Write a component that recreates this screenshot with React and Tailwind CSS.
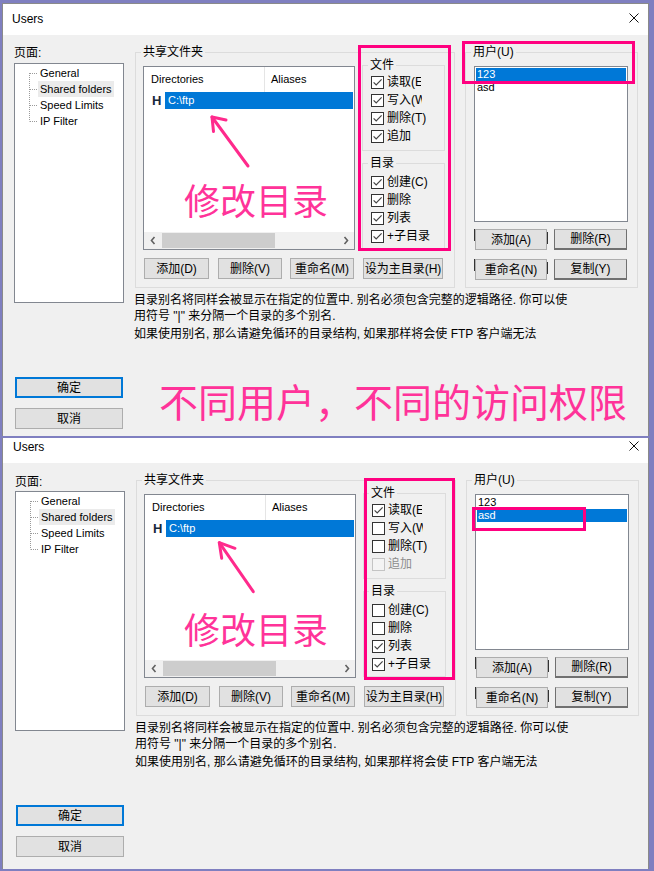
import React from 'react';

const ui = "font-[family-name:'Liberation_Sans','Noto_Sans_CJK_SC',sans-serif]";
const cjk = "font-[family-name:'Noto_Sans_CJK_SC',sans-serif]";

const perms = [
  {
    file: [
      { label: '读取(E)', on: true, clip: 'max-w-[34px]' },
      { label: '写入(W)', on: true, clip: 'max-w-[35px]' },
      { label: '删除(T)', on: true },
      { label: '追加', on: true },
    ],
    dir: [
      { label: '创建(C)', on: true },
      { label: '删除', on: true },
      { label: '列表', on: true },
      { label: '+子目录', on: true },
    ],
  },
  {
    file: [
      { label: '读取(E)', on: true, clip: 'max-w-[34px]' },
      { label: '写入(W)', on: false, clip: 'max-w-[35px]' },
      { label: '删除(T)', on: false },
      { label: '追加', on: false, off: true },
    ],
    dir: [
      { label: '创建(C)', on: false },
      { label: '删除', on: false },
      { label: '列表', on: true },
      { label: '+子目录', on: true },
    ],
  },
];

function Btn({ className = '', children }) {
  return (
    <div className={`flex shrink-0 items-center justify-center bg-[#e1e1e1] text-[12px] leading-[14px] ${className}`}>
      {children}
    </div>
  );
}

function Group({ label, className = '', children }) {
  return (
    <div className={`relative shrink-0 border border-[#dcdcdc] ${className}`}>
      <span className="absolute left-[5px] top-[-8px] bg-[#f0f0f0] px-[2px] text-[12px] leading-[14px] whitespace-nowrap">
        {label}
      </span>
      {children}
    </div>
  );
}

function Check({ label, on, off, clip = '' }) {
  return (
    <div className="flex h-[18px] items-center">
      <span
        className={`flex h-[13px] w-[13px] shrink-0 items-center justify-center border ${
          off ? 'border-[#c4c4c4] bg-[#f4f4f4]' : 'border-[#333] bg-white'
        }`}
      >
        {on && (
          <svg width="11" height="11" viewBox="0 0 11 11">
            <path d="M1.6 5.4 L4.2 8 L9.6 2.4" fill="none" stroke="#444" strokeWidth="1.2" />
          </svg>
        )}
      </span>
      <span
        className={`ml-[3px] overflow-hidden whitespace-nowrap text-[12px] leading-[14px] ${clip} ${
          off ? 'text-[#8d8d8d]' : 'text-black'
        }`}
      >
        {label}
      </span>
    </div>
  );
}

function Chevron({ dir }) {
  return (
    <svg width="8" height="9" viewBox="0 0 8 9">
      <path
        d={dir === 'l' ? 'M5.5 1 L2.5 4.5 L5.5 8' : 'M2.5 1 L5.5 4.5 L2.5 8'}
        fill="none"
        stroke="#606060"
        strokeWidth="1.6"
      />
    </svg>
  );
}

function Tree() {
  const items = ['General', 'Shared folders', 'Speed Limits', 'IP Filter'];
  return (
    <div className="h-[240px] border border-[#828790] bg-white pt-[1px]">
      {items.map((t, i) => (
        <div key={t} className="flex h-[16px] items-center">
          <svg width="23" height="16" className="shrink-0">
            <line x1="14.5" y1={i === 0 ? 8 : 0} x2="14.5" y2={i === 3 ? 8.5 : 16} stroke="#9a9a9a" strokeDasharray="1 1" />
            <line x1="15" y1="8.5" x2="23" y2="8.5" stroke="#9a9a9a" strokeDasharray="1 1" />
          </svg>
          <span className={`px-[2px] text-[11px] leading-[16px] whitespace-nowrap ${i === 1 ? 'bg-[#ebebeb]' : ''}`}>{t}</span>
        </div>
      ))}
    </div>
  );
}

function ListView() {
  return (
    <div className="mt-[1px] flex h-[184px] w-[212px] shrink-0 flex-col border border-[#828790] bg-white">
      <div className="flex h-[25px] shrink-0 items-center text-[11px]">
        <div className="flex h-full w-[121px] items-center border-r border-[#e5e5e5] pl-[7px]">Directories</div>
        <div className="pl-[6px]">Aliases</div>
      </div>
      <div className="flex h-[17px] shrink-0 items-center">
        <span className="ml-[8px] w-[13px] text-[13px] font-bold leading-[17px] text-[#17283b]">H</span>
        <div className="mr-[1px] flex h-full flex-1 items-center bg-[#0078d7] pl-[3px] text-[11px] text-white">C:\ftp</div>
      </div>
      <div className="flex-1" />
      <div className="flex h-[17px] shrink-0 items-center bg-[#f0f0f0]">
        <span className="flex w-[17px] justify-center"><Chevron dir="l" /></span>
        <span className="ml-[1px] h-[15px] w-[113px] bg-[#cdcdcd]" />
        <span className="flex-1" />
        <span className="flex w-[17px] justify-center"><Chevron dir="r" /></span>
      </div>
    </div>
  );
}

function Users({ sel }) {
  const dark = 'border border-t-[#adadad] border-x-[#707070] border-b-2 border-b-[#707070]';
  return (
    <>
      <div className="h-[156px] w-[154px] border border-[#828790] bg-white p-[1px] text-[11px]">
        {['123', 'asd'].map((u) => (
          <div key={u} className={`h-[13px] pl-[1px] leading-[13px] ${sel === u ? 'bg-[#0078d7] text-white' : ''}`}>
            {u}
          </div>
        ))}
      </div>
      {[['添加(A)', '删除(R)', 'mt-[7px]'], ['重命名(N)', '复制(Y)', 'mt-[9px]']].map(([a, b, m]) => (
        <div key={a} className={`relative flex ${m}`}>
          <span className="absolute left-0 top-0 h-[12px] w-[1px] bg-[#333]" />
          <span className="absolute left-[73px] top-[3px] h-[12px] w-[1px] bg-[#333]" />
          <Btn className="ml-[1px] h-[21px] w-[72px] border border-[#adadad]">{a}</Btn>
          <Btn className={`ml-[7px] h-[21px] w-[73px] ${dark}`}>{b}</Btn>
        </div>
      ))}
    </>
  );
}

function Dialog({ v }) {
  const top = v === 0;
  const p = perms[v];
  const arrow = top
    ? { tip: [209, 113], tail: [245, 162], a1: [223, 116], a2: [210.5, 127.5] }
    : { tip: [216.3, 104.7], tail: [250.3, 153.7], a1: [232, 110.3], a2: [218.7, 120.3] };
  return (
    <div
      className={`relative ml-[2px] w-[647px] shrink-0 border-x border-[#8a8a8a] bg-[#f0f0f0] ${
        top ? 'mt-[3px] border-t' : 'mt-[2px]'
      }`}
    >
      <div
        className={`flex items-end justify-between bg-white pb-[9px] pr-[9px] ${
          top ? 'h-[31px] pl-[9px]' : 'h-[25px] pl-[10px]'
        }`}
      >
        <span className="text-[12px] leading-[14px]">Users</span>
        <svg width="10" height="10" viewBox="0 0 10 10" className="mb-[3px]">
          <path d="M0.5 0.5 L9.5 9.5 M9.5 0.5 L0.5 9.5" stroke="#111" strokeWidth="1" />
        </svg>
      </div>

      <div className={`flex ${top ? 'h-[401px] pl-[11px]' : 'h-[406px] pl-[12px]'}`}>
        <div className="flex w-[110px] shrink-0 flex-col">
          <div className={`text-[12px] leading-[14px] ${top ? 'mt-[11px]' : 'mt-[12px]'}`}>页面:</div>
          <div className={top ? 'mt-[3px]' : 'mt-[2px]'}>
            <Tree />
          </div>
          <Btn className="ml-[1px] mt-[74px] h-[21px] w-[108px] border-2 border-[#0078d7]">确定</Btn>
          <Btn className="ml-[1px] mt-[10px] h-[21px] w-[108px] border border-[#adadad]">取消</Btn>
        </div>

        <div className="ml-[10px] flex flex-col">
          <div className="mt-[17px] flex">
            <Group label="共享文件夹" className="ml-[1px] h-[236px] w-[320px] pl-[7px] pt-[12px]">
              <div className="flex items-start">
                <ListView />
                <div className="ml-[7px] flex w-[83px] shrink-0 flex-col">
                  <Group label="文件" className="h-[86px] pl-[8px] pt-[7px]">
                    {p.file.map((c) => <Check key={c.label} {...c} />)}
                  </Group>
                  <Group label="目录" className="mt-[12px] h-[86px] pl-[8px] pt-[9px]">
                    {p.dir.map((c) => <Check key={c.label} {...c} />)}
                  </Group>
                </div>
              </div>
              <div className="mt-[8px] flex">
                <Btn className="ml-[1px] h-[21px] w-[65px] border border-[#adadad]">添加(D)</Btn>
                <Btn className="ml-[9px] h-[21px] w-[64px] border border-[#adadad]">删除(V)</Btn>
                <Btn className="ml-[8px] h-[21px] w-[64px] border border-[#adadad]">重命名(M)</Btn>
                <Btn className="ml-[9px] h-[21px] w-[80px] border border-[#adadad]">设为主目录(H)</Btn>
              </div>
            </Group>
            <Group label="用户(U)" className="ml-[10px] h-[236px] w-[173px] pl-[8px] pt-[13px]">
              <Users sel={top ? '123' : 'asd'} />
            </Group>
          </div>
          <div className="mt-[4px] whitespace-nowrap text-[12px] leading-[16px]">
            <div>目录别名将同样会被显示在指定的位置中. 别名必须包含完整的逻辑路径. 你可以使</div>
            <div>用符号 "|" 来分隔一个目录的多个别名.</div>
            <div className="mt-[2px]">如果使用别名, 那么请避免循环的目录结构, 如果那样将会使 FTP 客户端无法</div>
          </div>
        </div>
      </div>

      {/* annotations */}
      <div
        className={`pointer-events-none absolute border-[3px] border-[#ff0080] ${
          top ? 'left-[355px] top-[41px] h-[206px] w-[93px]' : 'left-[361px] top-[40px] h-[202px] w-[91px]'
        }`}
      />
      <div
        className={`pointer-events-none absolute border-[3px] border-[#ff0080] ${
          top ? 'left-[459px] top-[37px] h-[43px] w-[173px]' : 'left-[469px] top-[69px] h-[24px] w-[114px]'
        }`}
      />
      <div
        className={`pointer-events-none absolute left-[181px] text-[36px] leading-[36px] text-[#ff3399] ${cjk} ${
          top ? 'top-[177px]' : 'top-[172px]'
        }`}
      >
        修改目录
      </div>
      <svg className="pointer-events-none absolute left-0 top-0" width="300" height="200">
        <g stroke="#ff2a8c" strokeWidth="3" strokeLinecap="round" fill="none">
          <line x1={arrow.tail[0]} y1={arrow.tail[1]} x2={arrow.tip[0]} y2={arrow.tip[1]} />
          <polyline
            points={`${arrow.a1[0]},${arrow.a1[1]} ${arrow.tip[0]},${arrow.tip[1]} ${arrow.a2[0]},${arrow.a2[1]}`}
            strokeLinejoin="round"
          />
        </g>
      </svg>
      {top && (
        <div
          className={`pointer-events-none absolute left-[156px] top-[377px] whitespace-nowrap text-[39px] leading-[39px] text-[#ff3399] ${cjk}`}
        >
          不同用户，不同的访问权限
        </div>
      )}
    </div>
  );
}

export default function App() {
  return (
    <div className={`flex h-[871px] w-[654px] flex-col overflow-hidden bg-[#7f7fc0] text-black ${ui}`}>
      <Dialog v={0} />
      <Dialog v={1} />
    </div>
  );
}
